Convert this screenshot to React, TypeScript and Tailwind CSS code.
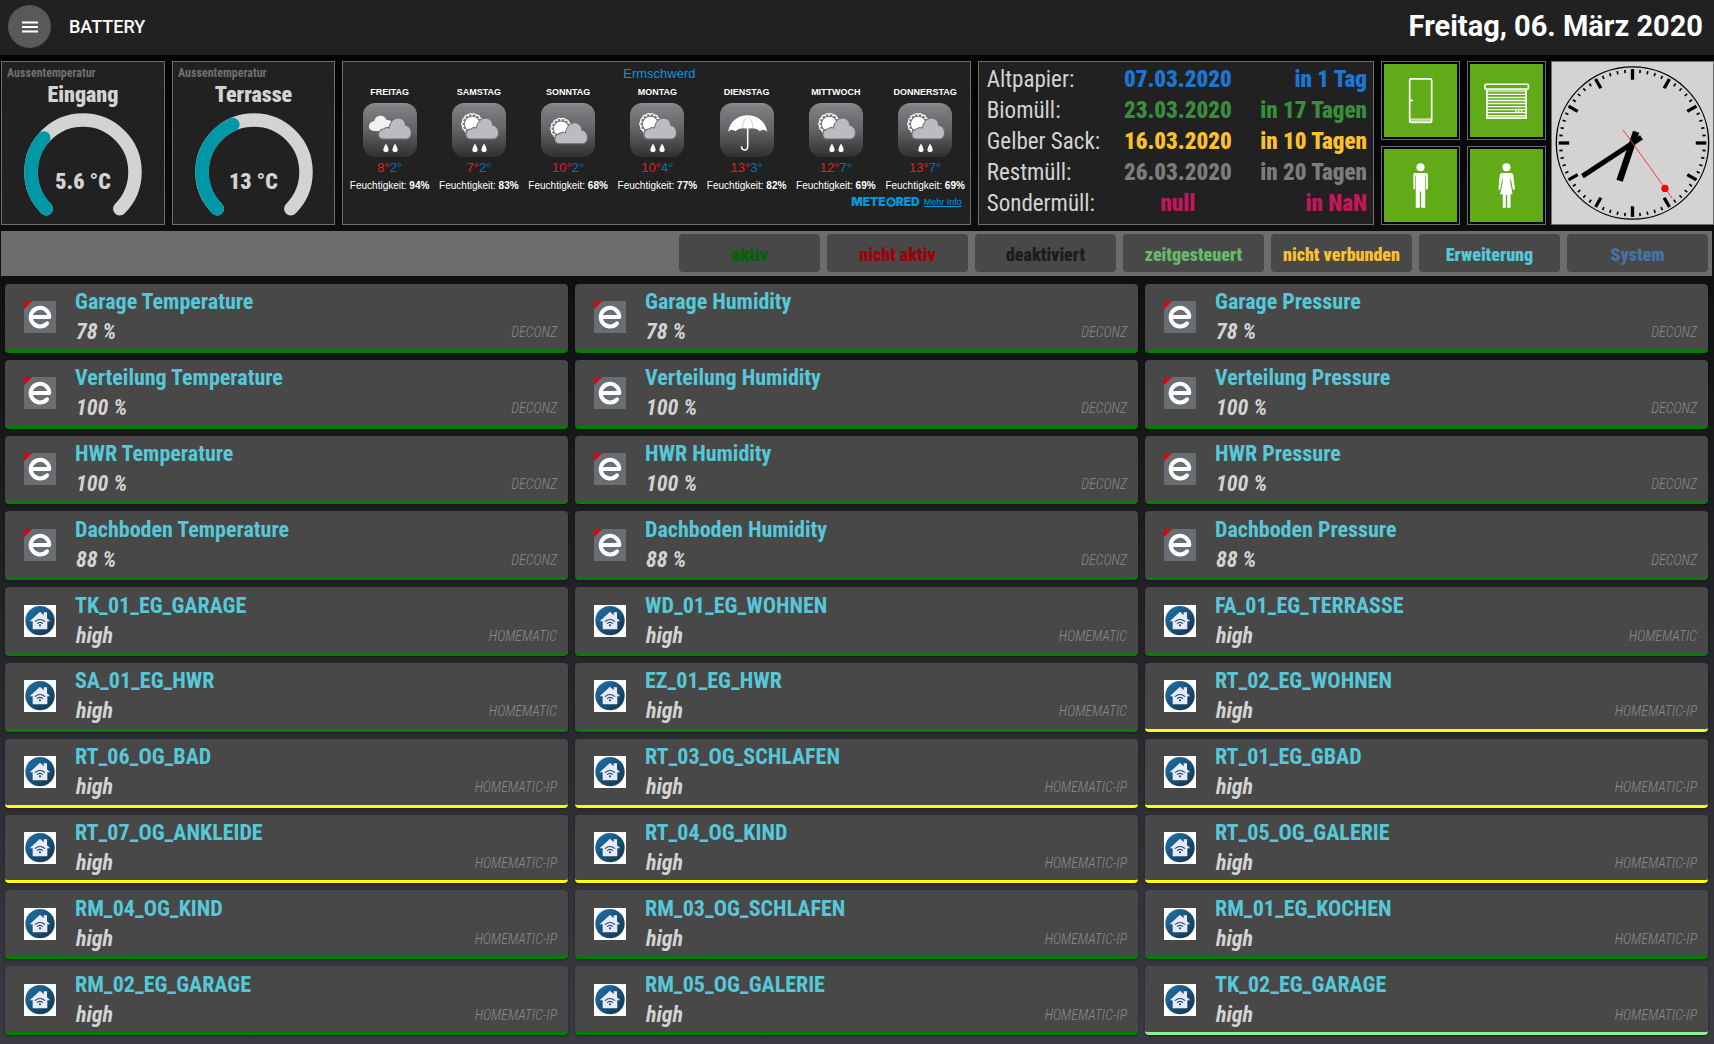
import type { ReactNode } from "react";
import clsx from "clsx";

type Sky = "cloudRain" | "sunRain" | "sunCloud" | "umbrella";
type Level = "ok" | "ip" | "new";

interface Device {
  name: string;
  value: string;
  adapter: string;
  level: Level;
}

const forecast: { day: string; sky: Sky; max: number; min: number; humidity: number }[] = [
  { day: "FREITAG", sky: "cloudRain", max: 8, min: 2, humidity: 94 },
  { day: "SAMSTAG", sky: "sunRain", max: 7, min: 2, humidity: 83 },
  { day: "SONNTAG", sky: "sunCloud", max: 10, min: 2, humidity: 68 },
  { day: "MONTAG", sky: "sunRain", max: 10, min: 4, humidity: 77 },
  { day: "DIENSTAG", sky: "umbrella", max: 13, min: 3, humidity: 82 },
  { day: "MITTWOCH", sky: "sunRain", max: 12, min: 7, humidity: 69 },
  { day: "DONNERSTAG", sky: "sunRain", max: 13, min: 7, humidity: 69 },
];

const waste = [
  { label: "Altpapier:", date: "07.03.2020", due: "in 1 Tag", color: "text-[#1c77d4]" },
  { label: "Biomüll:", date: "23.03.2020", due: "in 17 Tagen", color: "text-[#388e3c]" },
  { label: "Gelber Sack:", date: "16.03.2020", due: "in 10 Tagen", color: "text-[#fbc02d]" },
  { label: "Restmüll:", date: "26.03.2020", due: "in 20 Tagen", color: "text-[#7c7c7c]" },
  { label: "Sondermüll:", date: "null", due: "in NaN", color: "text-[#c2185b]" },
];

const filters = [
  { label: "aktiv", color: "text-[#006400]" },
  { label: "nicht aktiv", color: "text-[#a00008]" },
  { label: "deaktiviert", color: "text-[#1c1c1c]" },
  { label: "zeitgesteuert", color: "text-[#66bb6a]" },
  { label: "nicht verbunden", color: "text-[#fbc02d]" },
  { label: "Erweiterung", color: "text-[#56c8d8]" },
  { label: "System", color: "text-[#4572a7]" },
];

const rooms = [
  ["Garage", "78 %"],
  ["Verteilung", "100 %"],
  ["HWR", "100 %"],
  ["Dachboden", "88 %"],
];

const deconz: Device[] = rooms.flatMap(([room, value]) =>
  ["Temperature", "Humidity", "Pressure"].map((kind) => ({
    name: `${room} ${kind}`,
    value,
    adapter: "DECONZ",
    level: "ok" as Level,
  })),
);

const homematic: [string, string, Level][] = [
  ["TK_01_EG_GARAGE", "HOMEMATIC", "ok"],
  ["WD_01_EG_WOHNEN", "HOMEMATIC", "ok"],
  ["FA_01_EG_TERRASSE", "HOMEMATIC", "ok"],
  ["SA_01_EG_HWR", "HOMEMATIC", "ok"],
  ["EZ_01_EG_HWR", "HOMEMATIC", "ok"],
  ["RT_02_EG_WOHNEN", "HOMEMATIC-IP", "ip"],
  ["RT_06_OG_BAD", "HOMEMATIC-IP", "ip"],
  ["RT_03_OG_SCHLAFEN", "HOMEMATIC-IP", "ip"],
  ["RT_01_EG_GBAD", "HOMEMATIC-IP", "ip"],
  ["RT_07_OG_ANKLEIDE", "HOMEMATIC-IP", "ip"],
  ["RT_04_OG_KIND", "HOMEMATIC-IP", "ip"],
  ["RT_05_OG_GALERIE", "HOMEMATIC-IP", "ip"],
  ["RM_04_OG_KIND", "HOMEMATIC-IP", "ok"],
  ["RM_03_OG_SCHLAFEN", "HOMEMATIC-IP", "ok"],
  ["RM_01_EG_KOCHEN", "HOMEMATIC-IP", "ok"],
  ["RM_02_EG_GARAGE", "HOMEMATIC-IP", "ok"],
  ["RM_05_OG_GALERIE", "HOMEMATIC-IP", "ok"],
  ["TK_02_EG_GARAGE", "HOMEMATIC-IP", "new"],
];

const devices: Device[] = [
  ...deconz,
  ...homematic.map(([name, adapter, level]) => ({ name, value: "high", adapter, level })),
];

const polar = (r: number, deg: number) => {
  const a = (deg * Math.PI) / 180;
  return `${(r * Math.cos(a)).toFixed(2)} ${(r * Math.sin(a)).toFixed(2)}`;
};

const arc = (from: number, to: number) =>
  `M${polar(52, from)}A52 52 0 ${to - from > 180 ? 1 : 0} 1 ${polar(52, to)}`;

const Gauge = ({ name, value, end }: { name: string; value: string; end: number }) => (
  <section className="relative flex flex-col items-center border border-[#6d6d6d] bg-[#212121] text-[#d3d3d3]">
    <p className="mt-[3px] ml-[5px] self-start text-[12px] leading-4 font-bold text-[#707070]">
      Aussentemperatur
    </p>
    <h2 className="text-[22px] leading-7 font-black">{name}</h2>
    <svg viewBox="-60 -60 120 108" className="mt-[3px] h-[108px] w-[120px]" fill="none" strokeWidth="13.5" strokeLinecap="round">
      <path d={arc(135, 405)} stroke="#d3d3d3" />
      <path d={arc(135, end)} stroke="#0097a7" />
    </svg>
    <p className="absolute inset-x-0 top-[106px] text-center text-[22px] leading-7 font-black">{value}</p>
  </section>
);

const Sun = () => (
  <g>
    {Array.from({ length: 14 }).map((_, i) => (
      <circle key={i} r="6" fill="#77787b" stroke="#fff" strokeWidth="3.5" transform={`rotate(${i * 25.7}) translate(25 0)`} />
    ))}
    <circle r="23" fill="#fff" stroke="#77787b" strokeWidth="3" />
  </g>
);

const CLOUD = "M60 107C40 107 42 78 63 76C67 72 73 72 77 74C84 34 126 38 126 66C148 70 148 107 128 107Z";

const SkyIcon = ({ sky }: { sky: Sky }) => {
  const rain = sky === "cloudRain" || sky === "sunRain";
  return (
    <svg viewBox="0 0 160 160" className="size-[54px]">
      <defs>
        <linearGradient id={`sky-${sky}`} x2="0" y2="1">
          <stop offset="0" stopColor="#909194" />
          <stop offset=".05" stopColor="#808184" />
          <stop offset=".5" stopColor="#626365" />
          <stop offset="1" stopColor="#303030" />
        </linearGradient>
      </defs>
      <rect width="160" height="160" rx="36" fill={`url(#sky-${sky})`} />
      {sky === "cloudRain" && (
        <path d="M32 83C10 80 16 54 33 54C38 32 66 34 70 51C80 48 88 56 84 66L50 84Z" fill="#f2f2f2" />
      )}
      {sky === "sunRain" && (
        <g transform="translate(60 62)">
          <Sun />
        </g>
      )}
      {sky === "sunCloud" && (
        <g transform="translate(60 76)">
          <Sun />
        </g>
      )}
      {sky !== "umbrella" && (
        <path
          d={CLOUD}
          fill="#bbbcbf"
          stroke="#6b6c6e"
          strokeWidth="3"
          transform={sky === "sunCloud" ? "translate(-5 14)" : sky === "sunRain" ? "translate(-5 0)" : undefined}
        />
      )}
      {rain && (
        <path
          d="M68 120q-16 25 0 26q16-1 0-26ZM95 120q-16 25 0 26q16-1 0-26Z"
          fill="#fff"
        />
      )}
      {sky === "umbrella" && (
        <>
          <path d="M24 86C34 20 130 20 140 86Q130 74 118 84Q108 72 82 76Q56 72 46 84Q34 74 24 86Z" fill="#fff" />
          <path d="M66 74Q68 52 78 44M98 74Q96 52 86 44" fill="none" stroke="#b5b5b7" strokeWidth="2" />
          <path d="M82 76V128Q82 140 72 139Q63 138 64 128" fill="none" stroke="#fff" strokeWidth="4.5" />
        </>
      )}
    </svg>
  );
};

const Weather = () => (
  <section className="border border-[#6d6d6d] bg-[#212121] pt-1 pl-0.5 font-['Liberation_Sans',Arial,sans-serif] text-white">
    <h2 className="pl-1 text-center text-[13px] leading-4 text-[#0099e0]">Ermschwerd</h2>
    <div className="mt-0.5 grid grid-cols-7">
      {forecast.map((f) => (
        <div key={f.day} className="flex flex-col items-center">
          <p className="mb-[3px] text-[9px] leading-4 font-bold">{f.day}</p>
          <SkyIcon sky={f.sky} />
          <p className="mt-[3px] text-[13px] leading-4">
            <span className="text-[#e21f26]">{f.max}°</span>
            <span className="text-[#0072bc]">{f.min}°</span>
          </p>
          <p className="mt-0.5 text-[10px] leading-4 whitespace-nowrap">
            Feuchtigkeit: <b>{f.humidity}%</b>
          </p>
        </div>
      ))}
    </div>
    <div className="flex h-4 items-center justify-end gap-1 pr-2 text-[#0099e0]">
      <span className="flex items-center font-['Inter',sans-serif] text-[12px] leading-4 font-black">
        METE
        <svg viewBox="0 0 10 10" className="size-2.5" fill="none" stroke="currentColor">
          <circle cx="5" cy="5" r="3.7" strokeWidth="2.2" />
          <path d="M4 6.5L7.5 2.5" strokeWidth="1" />
        </svg>
        RED
      </span>
      <a href="#info" className="text-[9px] leading-4 underline">
        Mehr Info
      </a>
    </div>
  </section>
);

const Waste = () => (
  <section className="border border-[#6d6d6d] bg-[#212121] px-1.5 pt-0.5">
    <table className="w-full text-[23px]">
      <tbody>
        {waste.map((w) => (
          <tr key={w.label} className="h-[31px] leading-7">
            <th scope="row" className="w-[134px] pl-0.5 text-left font-normal text-[#d3d3d3]">
              {w.label}
            </th>
            <td className={clsx("text-center font-black", w.color)}>{w.date}</td>
            <td className={clsx("w-[130px] text-right font-black", w.color)}>{w.due}</td>
          </tr>
        ))}
      </tbody>
    </table>
  </section>
);

const Tile = ({ label, children }: { label: string; children: ReactNode }) => (
  <button aria-label={label} className="size-[79px] border border-[#6d6d6d] bg-black p-0.5">
    <svg viewBox="0 0 216 216" className="size-full bg-[#61aa18]" fill="none" stroke="#fff">
      {children}
    </svg>
  </button>
);

const Tiles = () => (
  <div className="grid grid-cols-2 gap-x-[7px] gap-y-1.5">
    <Tile label="Türen">
      <rect x="76" y="44" width="65" height="129" rx="4" strokeWidth="5" />
      <path d="M76 108h10" strokeWidth="5" />
      <path d="M78 163h62" strokeWidth="3" />
      <path d="M78 168h62" strokeWidth="7" strokeOpacity=".5" />
    </Tile>
    <Tile label="Rollläden">
      <rect x="44" y="60" width="129" height="14" rx="4" strokeWidth="5" />
      <path d="M50 76V160H166V76" strokeWidth="5" />
      <path d="M50 80H166" strokeWidth="7" strokeOpacity=".6" />
      <path d="M50 90H166M50 99H166M50 108H166M50 117H166M50 126H166M50 135H166M50 144H166M50 153H166M136 132v12M144 132v12M153 132v12" strokeWidth="4" />
    </Tile>
    <Tile label="Anwesenheit Mann">
      <g fill="#fff" stroke="none">
        <circle cx="108" cy="54" r="12" />
        <path d="M90 71H126Q130 71 130 76V119H124V80H122V174H110V126H106V174H94V80H92V119H87V76Q87 71 90 71Z" />
      </g>
    </Tile>
    <Tile label="Anwesenheit Frau">
      <g fill="#fff" stroke="none">
        <circle cx="108" cy="54" r="12" />
        <path d="M94 71H122Q127 71 128 76L133 119L127 121L120 84L119 98L126 134H120V174H110V136H106V174H97V134H89L97 98L96 84L89 121L84 119L88 76Q89 71 94 71Z" />
      </g>
    </Tile>
  </div>
);

const Clock = () => (
  <section className="-ml-0.5 border border-[#6d6d6d] bg-[#d3d3d3]">
    <svg viewBox="-243 -243 486 486" className="size-full" stroke="#000" fill="none">
      <circle r="230" strokeWidth="4" />
      {Array.from({ length: 60 }).map((_, i) => (
        <path
          key={i}
          d={i % 5 === 0 ? "M0 -223V-191" : "M0 -222V-212"}
          strokeWidth={i % 5 === 0 ? 10 : 5}
          transform={`rotate(${i * 6})`}
        />
      ))}
      <path d="M27 -17L-151 100" strokeWidth="15" />
      <path d="M11 -34L-39 114" strokeWidth="20" />
      <path d="M-28 -39L120 167" stroke="#f33" strokeWidth="3" />
      <circle cx="98" cy="137" r="11" fill="red" stroke="none" />
    </svg>
  </section>
);

const DeconzIcon = () => (
  <svg viewBox="0 0 96 96" className="size-8 shrink-0">
    <path d="M0 0H96V96H0Z" fill="#696e72" />
    <path d="M0 0H25L0 25Z" fill="#e3000f" />
    <path d="M31 48H76A28 28 0 1 0 69 67" fill="none" stroke="#fff" strokeWidth="12" strokeLinecap="round" strokeLinejoin="round" />
  </svg>
);

const HomematicIcon = () => (
  <svg viewBox="0 0 96 96" className="size-8 shrink-0">
    <defs>
      <linearGradient id="hm" x2="1" y2="1">
        <stop offset=".2" stopColor="#1b679b" />
        <stop offset=".8" stopColor="#163d59" />
      </linearGradient>
    </defs>
    <path d="M0 0H96V96H0Z" fill="#fff" />
    <circle cx="48" cy="47" r="44" fill="url(#hm)" />
    <path d="M17 49L48 20L59 31V22H69V40L79 49H70V73H26V49Z" fill="#e8ebf7" />
    <g fill="none" stroke="#17486b" strokeWidth="3.5">
      <path d="M33 50Q48 37 63 50M39 56Q48 48 57 56" />
      <circle cx="48" cy="61" r="1.5" />
    </g>
  </svg>
);

const DeviceCard = ({ device }: { device: Device }) => (
  <article
    className={clsx(
      "flex items-center rounded border-b-[3px] bg-[#484848] pt-px pr-[11px] pl-[19px] shadow-sm shadow-black/30",
      device.level === "ok" && "border-[#008000]",
      device.level === "ip" && "border-[#ffff00]",
      device.level === "new" && "border-[#90ee90]",
    )}
  >
    {device.adapter === "DECONZ" ? <DeconzIcon /> : <HomematicIcon />}
    <div className="ml-[19px] flex-1 text-[22px] leading-[30px] font-bold">
      <h3 className="text-[#56c8d8]">{device.name}</h3>
      <div className="flex items-center justify-between">
        <span className="pl-px text-[#d3d3d3] italic">{device.value}</span>
        <span className="text-[14px] font-light text-[#8a8a8a] italic">{device.adapter}</span>
      </div>
    </div>
  </article>
);

export default function App() {
  return (
    <div className="flex min-h-screen flex-col bg-linear-to-b/srgb from-black to-[#3b3c43] font-['Roboto_Condensed','Liberation_Sans_Narrow','Roboto',sans-serif]">
      <header className="flex h-[55px] items-center bg-[#212121] pr-[11px] pb-0.5 pl-2 font-['Roboto',sans-serif] text-white">
        <button aria-label="Menü" className="flex size-[43px] items-center justify-center rounded-full bg-[#595959]">
          <svg viewBox="0 0 16 12" className="h-3 w-4" fill="none" stroke="#fff" strokeWidth="2">
            <path d="M0 1.5H16M0 6H16M0 10.5H16" />
          </svg>
        </button>
        <h1 className="ml-[18px] text-[18px] font-medium">BATTERY</h1>
        <time className="ml-auto text-[29px] font-bold">Freitag, 06. März 2020</time>
      </header>

      <div className="mt-1.5 grid grid-cols-[164px_163px_630fr_397fr_165px_161px] gap-x-[7px] pl-px">
        <Gauge name="Eingang" value="5.6 °C" end={221} />
        <Gauge name="Terrasse" value="13 °C" end={246} />
        <Weather />
        <Waste />
        <Tiles />
        <Clock />
      </div>

      <nav className="mt-1.5 mr-0.5 ml-px flex h-[45px] items-start justify-end gap-[7px] bg-[#6d6d6d] pt-[3px] pr-1">
        {filters.map((f) => (
          <button key={f.label} className={clsx("h-[38px] w-[141px] rounded bg-[#484848] pt-0.5 text-[18px] font-black", f.color)}>
            {f.label}
          </button>
        ))}
      </nav>

      <main className="mt-2 mb-[9px] grid flex-1 auto-rows-fr grid-cols-3 gap-[7px] pr-1.5 pl-[5px]">
        {devices.map((d) => (
          <DeviceCard key={d.name} device={d} />
        ))}
      </main>
    </div>
  );
}
